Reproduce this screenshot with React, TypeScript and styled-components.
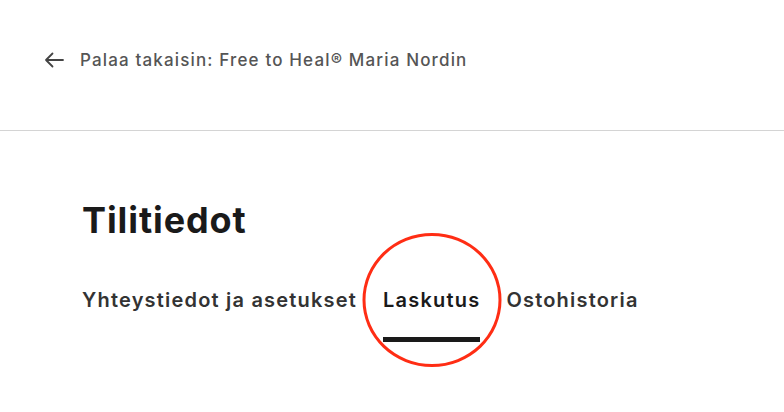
import React from "react";
import styled, { createGlobalStyle } from "styled-components";

const GlobalStyle = createGlobalStyle`
  body {
    margin: 0;
    background: #ffffff;
    font-family: Inter, "Noto Sans", sans-serif;
    color: #1a1a1a;
  }
`;

const tabs = ["Yhteystiedot ja asetukset", "Laskutus", "Ostohistoria"];
const activeTab = "Laskutus";

const BackArrow: React.FC = () => (
  <svg width="20" height="16" viewBox="0 0 20 16" fill="none">
    <path
      d="M19 8H2M8.5 1.5L2 8l6.5 6.5"
      stroke="#444"
      strokeWidth="1.8"
      strokeLinecap="round"
      strokeLinejoin="round"
    />
  </svg>
);

export default function App() {
  return (
    <Page>
      <GlobalStyle />
      <Header>
        <BackLink href="#">
          <BackArrow />
          <span>Palaa takaisin: Free to Heal® Maria Nordin</span>
        </BackLink>
      </Header>
      <Content>
        <Title>Tilitiedot</Title>
        <TabRow>
          {tabs.map((tab) => (
            <Tab key={tab} $active={tab === activeTab}>
              {tab}
              {tab === activeTab && <Highlight />}
            </Tab>
          ))}
        </TabRow>
      </Content>
    </Page>
  );
}

const Page = styled.div`
  width: 784px;
  height: 412px;
  overflow: hidden;
`;

const Header = styled.header`
  height: 131px;
  border-bottom: 1px solid #d4d4d4;
  padding-left: 44px;
  box-sizing: border-box;
  display: flex;
  align-items: center;
`;

const BackLink = styled.a`
  display: flex;
  align-items: center;
  gap: 16px;
  color: #555555;
  text-decoration: none;
  font-size: 17px;
  font-weight: 500;
  letter-spacing: 1.15px;
  margin-top: -10px;
`;

const Content = styled.main`
  padding: 67px 0 0 82px;
`;

const Title = styled.h1`
  margin: 0;
  font-size: 36px;
  font-weight: 700;
  line-height: 44px;
  letter-spacing: 0.9px;
  color: #1a1a1a;
`;

const TabRow = styled.nav`
  display: flex;
  gap: 26px;
  margin-top: 46px;
`;

const Tab = styled.div<{ $active: boolean }>`
  position: relative;
  font-size: 20px;
  font-weight: 600;
  line-height: 24px;
  letter-spacing: 1.2px;
  padding-bottom: 25px;
  color: ${(p) => (p.$active ? "#1a1a1a" : "#333333")};
  border-bottom: 5px solid ${(p) => (p.$active ? "#1a1a1a" : "transparent")};
`;

const Highlight = styled.span`
  position: absolute;
  left: 50%;
  top: 12px;
  width: 139px;
  height: 134px;
  transform: translate(-50%, -50%);
  border: 3px solid #ff2d14;
  border-radius: 50%;
  box-sizing: border-box;
  pointer-events: none;
`;
